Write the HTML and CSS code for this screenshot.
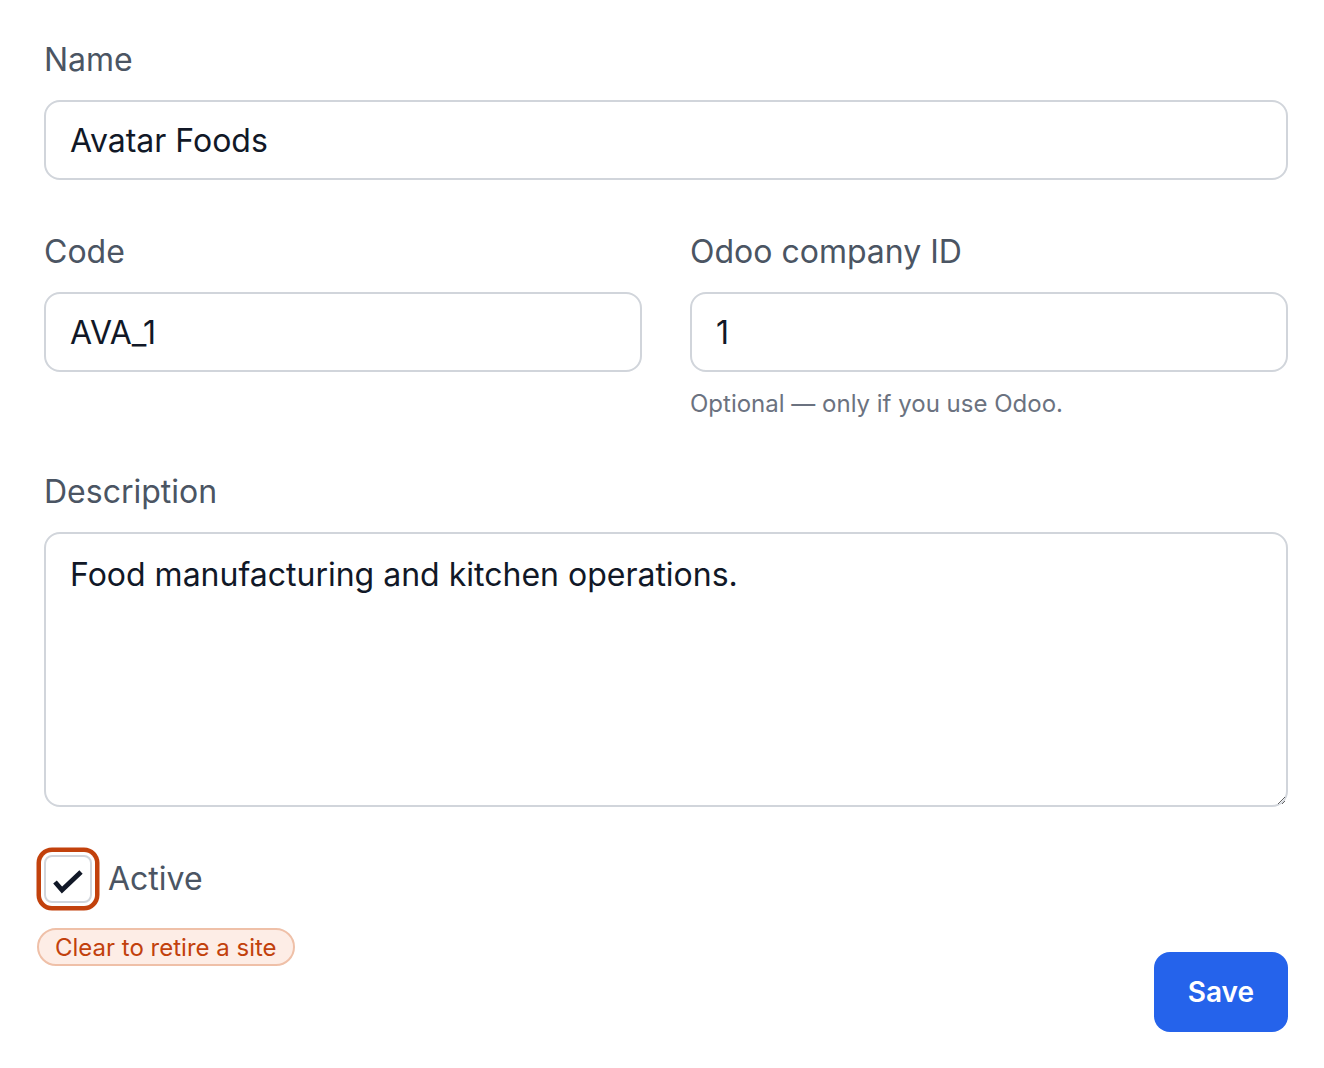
FILE: index.html
```html
<!DOCTYPE html>
<html lang="en">
<head>
<meta charset="utf-8">
<title>Site</title>
<link rel="stylesheet" href="styles.css">
</head>
<body>
<form class="form">
  <div class="field">
    <label class="label" for="name">Name</label>
    <input class="input" id="name" type="text" value="Avatar Foods">
  </div>
  <div class="row">
    <div class="field">
      <label class="label" for="code">Code</label>
      <input class="input" id="code" type="text" value="AVA_1">
    </div>
    <div class="field">
      <label class="label" for="odoo">Odoo company ID</label>
      <input class="input" id="odoo" type="text" value="1">
      <p class="help">Optional — only if you use Odoo.</p>
    </div>
  </div>
  <div class="field">
    <label class="label" for="desc">Description</label>
    <textarea class="input textarea" id="desc">Food manufacturing and kitchen operations.</textarea>
  </div>
  <div class="check-field">
    <label class="check">
      <span class="box">
        <svg width="44" height="44" viewBox="0 0 44 44" aria-hidden="true"><path d="M9 25 L16 33 L35 15" fill="none" stroke="#111827" stroke-width="4.8" stroke-linecap="butt" stroke-linejoin="miter"/></svg>
      </span>
      <span class="check-text">Active</span>
    </label>
    <span class="pill">Clear to retire a site</span>
  </div>
  <div class="actions">
    <button class="btn" type="button">Save</button>
  </div>
</form>
</body>
</html>
```
FILE: styles.css
```css
* { box-sizing: border-box; }
html, body { margin: 0; padding: 0; background: #ffffff; }
body { font-family: Inter, "Noto Sans", sans-serif; }

.form {
  padding: 36px 36px 0 44px;
  display: flex;
  flex-direction: column;
  gap: 48px;
}

.field { display: flex; flex-direction: column; }

.label {
  font-size: 32px;
  line-height: 48px;
  color: #4b5563;
  margin-bottom: 16px;
}

.input {
  font-family: Inter, "Noto Sans", sans-serif;
  font-size: 32px;
  line-height: 48px;
  color: #111827;
  border: 2px solid #d1d5db;
  border-radius: 16px;
  padding: 14px 24px;
  height: 80px;
  width: 100%;
  background: #fff;
  outline: none;
}

.textarea {
  height: 275px;
  padding-top: 17px;
  resize: vertical;
  display: block;
}

.row {
  display: grid;
  grid-template-columns: 1fr 1fr;
  gap: 48px;
}

.help {
  margin: 16px 0 0;
  font-size: 24px;
  line-height: 32px;
  color: #6b7280;
}

.check-field { position: relative; }

.check {
  display: flex;
  align-items: center;
  gap: 16px;
}

.box {
  width: 48px;
  height: 48px;
  border: 2px solid #d1d5db;
  border-radius: 8px;
  background: #fff;
  display: flex;
  align-items: center;
  justify-content: center;
  box-shadow: 0 0 0 3px #fff, 0 0 0 7.5px #c2410c;
}

.box svg { display: block; }

.check-text {
  font-size: 32px;
  line-height: 48px;
  color: #4b5563;
}

.pill {
  position: absolute;
  left: -7px;
  top: 73px;
  height: 38px;
  padding: 0 16px;
  display: inline-flex;
  align-items: center;
  border: 2px solid #efc0a8;
  background: #fdede6;
  border-radius: 999px;
  color: #c2410c;
  font-size: 24px;
  white-space: nowrap;
}

.actions {
  display: flex;
  justify-content: flex-end;
}

.btn {
  font-family: Inter, "Noto Sans", sans-serif;
  height: 80px;
  margin-top: 1px;
  padding: 0 34px;
  border: none;
  border-radius: 16px;
  background: #2563eb;
  color: #fff;
  font-size: 28px;
  font-weight: 600;
}
```
